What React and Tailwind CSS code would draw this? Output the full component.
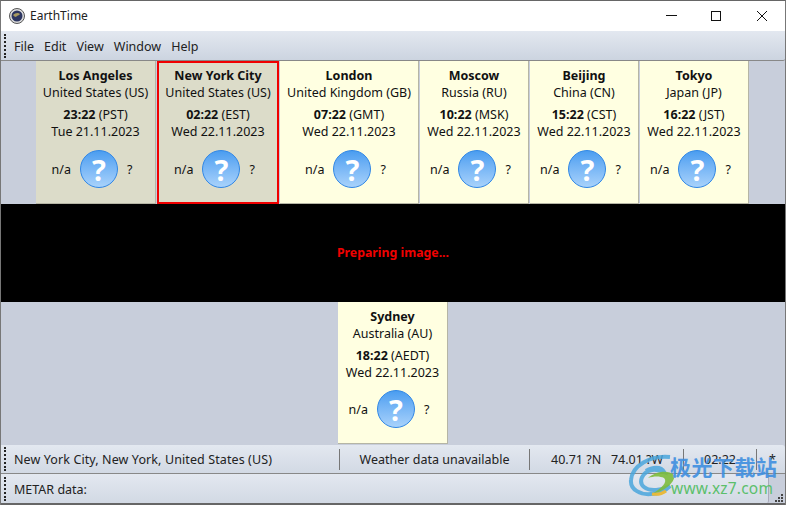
const font = { fontFamily: '"Noto Sans", "Noto Sans CJK SC", sans-serif' };

function QIcon() {
  return (
    <div className="w-[38px] h-[38px] rounded-full border border-[#2f86e6] bg-gradient-to-b from-[#4a9df0] to-[#a8d2fb] flex items-center justify-center text-white font-bold text-[29px] leading-none shrink-0">
      ?
    </div>
  );
}

function Card({ city, country, time, tz, date, w, bg = "bg-[#ffffe1]", selected, h = "h-[143px]", rowMt = "mt-[10px]" }) {
  return (
    <div
      className={`${w} ${h} shrink-0 ${bg} flex flex-col items-center text-[12.5px] leading-[17px] text-[#111] ${
        selected ? "border-2 border-[#f00000] pt-[4px]" : "border-r border-b border-[#b5b5a5] pt-[6px]"
      }`}
    >
      <div className="font-bold">{city}</div>
      <div>{country}</div>
      <div className="mt-[5px]"><span className="font-bold">{time}</span> ({tz})</div>
      <div>{date}</div>
      <div className={`flex items-center gap-[9px] pr-[7px] ${rowMt}`}>
        <span>n/a</span>
        <QIcon />
        <span>?</span>
      </div>
    </div>
  );
}

function Grip() {
  return <div className="w-[2px] h-[24px] shrink-0 border-l-2 border-dotted border-[#222] ml-[3px] mr-[8px]" />;
}

const Sep = () => <div className="w-px h-[21px] bg-[#777] shrink-0" />;

export default function App() {
  return (
    <div className="w-[786px] h-[505px] relative overflow-hidden bg-[#c8cedb] border-t border-[#666] border-x border-x-[#777] flex flex-col" style={font}>
      <div className="h-[30px] bg-white flex items-center shrink-0 text-[12px] text-[#222]">
        <svg className="ml-[8px] mr-[5px]" width="16" height="16" viewBox="0 0 16 16">
          <circle cx="8" cy="8" r="7.5" fill="#ddd" stroke="#555" />
          <circle cx="8" cy="8" r="5.5" fill="#2c3560" />
          <path d="M4 7c2-2 5-3 7-1-1 2-3 1-4 3-1 0-2-1-3-2z" fill="#a89a60" />
        </svg>
        <span>EarthTime</span>
        <div className="ml-auto flex items-center text-[#111]">
          <svg width="46" height="30" viewBox="0 0 46 30"><path d="M19 14.5h11" stroke="#111" /></svg>
          <svg width="46" height="30" viewBox="0 0 46 30"><rect x="18.5" y="10.5" width="9" height="9" fill="none" stroke="#111" /></svg>
          <svg width="46" height="30" viewBox="0 0 46 30"><path d="M18 10l10 10M28 10l-10 10" stroke="#111" /></svg>
        </div>
      </div>

      <div className="h-[30px] shrink-0 flex items-center bg-gradient-to-b from-[#e3e8f0] to-[#ccd4e0] border-b border-[#888] rounded-br-[2px] text-[12.5px] text-[#222]">
        <Grip />
        <div className="flex gap-[10px] pt-[3px]">
          <span>File</span><span>Edit</span><span>View</span><span>Window</span><span>Help</span>
        </div>
      </div>

      <div className="flex pl-[35px] shrink-0 gap-px">
        <Card w="w-[120px]" bg="bg-[#dcdcc9]" city="Los Angeles" country="United States (US)" time="23:22" tz="PST" date="Tue 21.11.2023" />
        <Card w="w-[122px]" bg="bg-[#dcdcc9]" selected city="New York City" country="United States (US)" time="02:22" tz="EST" date="Wed 22.11.2023" />
        <Card w="w-[139px]" city="London" country="United Kingdom (GB)" time="07:22" tz="GMT" date="Wed 22.11.2023" />
        <Card w="w-[109px]" city="Moscow" country="Russia (RU)" time="10:22" tz="MSK" date="Wed 22.11.2023" />
        <Card w="w-[109px]" city="Beijing" country="China (CN)" time="15:22" tz="CST" date="Wed 22.11.2023" />
        <Card w="w-[109px]" city="Tokyo" country="Japan (JP)" time="16:22" tz="JST" date="Wed 22.11.2023" />
      </div>

      <div className="h-[98px] shrink-0 bg-black flex items-center justify-center text-[#f00000] font-bold text-[12.3px]">
        Preparing image...
      </div>

      <div className="flex justify-center shrink-0">
        <Card w="w-[110px]" h="h-[142px]" rowMt="mt-[9px]" city="Sydney" country="Australia (AU)" time="18:22" tz="AEDT" date="Wed 22.11.2023" />
      </div>

      <div className="h-[29px] mt-px shrink-0 flex items-center bg-gradient-to-b from-[#e3e8f0] to-[#d2d9e4] border-b border-[#888] rounded-tr-[3px] text-[12.5px] text-[#222]">
        <Grip />
        <div className="w-[325px] shrink-0 truncate pt-[2px] tracking-[0.1px]">New York City, New York, United States (US)</div>
        <Sep />
        <div className="w-[189px] shrink-0 text-center pt-[2px]">Weather data unavailable</div>
        <Sep />
        <div className="w-[153px] shrink-0 pl-[21px] pt-[2px] whitespace-pre">40.71 ?N   74.01 ?W</div>
        <Sep />
        <div className="w-[72px] shrink-0 text-center pt-[2px]">02:22</div>
        <Sep />
        <div className="pl-[12px] pt-[2px]">*</div>
      </div>

      <div className="h-[29px] shrink-0 flex items-center relative">
        <div className="w-[768px] h-full flex items-center bg-gradient-to-b from-[#e3e8f0] to-[#d2d9e4] text-[12.5px] text-[#222] rounded-br-[2px] border-r border-[#aab]">
          <Grip />
          <span className="pt-[3px]">METAR data:</span>
        </div>
        <svg className="absolute right-[1px] bottom-[0px]" width="10" height="10" viewBox="0 0 10 10" fill="#444">
          <rect x="7" y="1" width="2" height="2" /><rect x="4" y="4" width="2" height="2" /><rect x="7" y="4" width="2" height="2" />
          <rect x="1" y="7" width="2" height="2" /><rect x="4" y="7" width="2" height="2" /><rect x="7" y="7" width="2" height="2" />
        </svg>
      </div>
      <div className="flex-1 bg-[#666]" />

      <div className="absolute left-[627px] top-[453px] pointer-events-none">
        <svg width="56" height="44" viewBox="0 0 56 44">
          <path d="M42 3C22 1 4 12 3 26c-1 10 10 15 20 14 8 0 14-3 19-8-8 4-20 6-26 1-6-5-2-15 8-17 5-1 9 1 12 2-3-6-12-5-18-1" fill="none" stroke="#4aa6dc" strokeWidth="4" opacity="0.85" />
          <path d="M20 24c6-6 20-9 26-3 2 6-8 16-22 19 10-6 16-12 12-16-4-2-10-2-16 0z" fill="#7dbb3c" opacity="0.9" />
          <path d="M24 40c6 1 10 0 14-3" stroke="#e8b93c" strokeWidth="3" fill="none" />
        </svg>
      </div>
      <div className="absolute left-[669px] top-[452px] text-[#3f8fe0] font-bold text-[21px] leading-[28px] tracking-[0.5px] pointer-events-none opacity-90">极光下载站</div>
      <div className="absolute left-[670px] top-[477px] text-[#5cbf6c] text-[15.5px] leading-[20px] tracking-[0.2px] pointer-events-none">www.xz7.com</div>
    </div>
  );
}
